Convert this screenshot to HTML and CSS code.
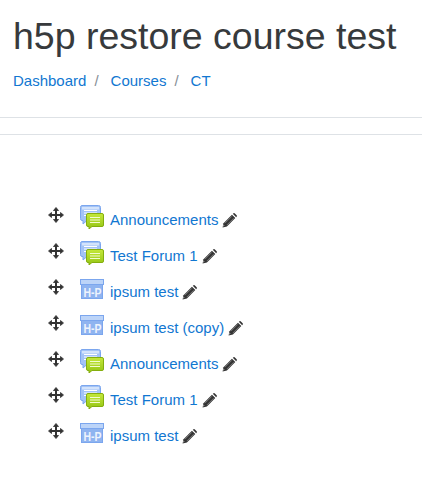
FILE: index.html
```html
<!DOCTYPE html>
<html lang="en">
<head>
<meta charset="utf-8">
<title>h5p restore course test</title>
<link rel="stylesheet" href="styles.css">
</head>
<body>
<svg class="defs" width="0" height="0" aria-hidden="true">
  <defs>
    <linearGradient id="green" x1="0" y1="0" x2="0" y2="1">
      <stop offset="0" stop-color="#c4e83a"/>
      <stop offset="1" stop-color="#93c414"/>
    </linearGradient>
    <symbol id="move" viewBox="0 0 16 16">
      <g fill="#333" stroke="#333" stroke-width=".8" stroke-linejoin="round">
        <path d="M8 .5 10.500 3.500H5.500Z"/>
        <path d="M8 .5 10.500 3.500H5.500Z" transform="rotate(90 8 8)"/>
        <path d="M8 .5 10.500 3.500H5.500Z" transform="rotate(180 8 8)"/>
        <path d="M8 .5 10.500 3.500H5.500Z" transform="rotate(270 8 8)"/>
      </g>
      <path d="M7 3H9V7H13V9H9V13H7V9H3V7H7Z" fill="#333"/>
    </symbol>
    <symbol id="pencil" viewBox="0 0 16 16">
      <path d="M0.6 15.4 1.6 10.8 10.6 1.800 14.200 5.400 5.200 14.400Z" fill="#333"/>
      <path d="M11.500 0.900 12.300 0.300Q13 -0.100 13.700 0.400L15.600 2.300Q16.100 3 15.700 3.700L15.100 4.500Z" fill="#333"/>
      <path d="M3.100 10.900 10.400 3.600M5.100 12.900 12.400 5.600" stroke="#fff" stroke-width=".6" opacity=".6"/>
      <path d="M2.600 13.400 1.400 14.600 1.800 12.600Z" fill="#fff"/>
    </symbol>
    <symbol id="forum" viewBox="0 0 24 24">
      <path d="M2 .5H18.500Q20.500 .5 20.500 2.500V13.500Q20.500 15.500 18.500 15.500H7L3 19V15.500H2Q.5 15.500 .5 13.500V2.500Q.5 .5 2 .5Z" fill="#a3c3f6" stroke="#7ba6ee"/>
      <rect x="2" y="2" width="17" height="2.500" fill="#d3e3fb"/>
      <path d="M4 5.500H17M4 8H17M4 10.500H8" stroke="#fff"/>
      <path d="M8 8.500H22Q23.500 8.500 23.500 10V20Q23.500 21.500 22 21.500H12L9 24V21.500H8Q6.500 21.500 6.500 20V10Q6.500 8.500 8 8.500Z" fill="url(#green)" stroke="#84ae0e"/>
      <path d="M10 12.500H20M10 15H20M10 17.500H20" stroke="#f2fbd0"/>
    </symbol>
    <symbol id="h5p" viewBox="0 0 24 24">
      <rect x=".5" y="2.500" width="23" height="5" fill="#bcd4f8" stroke="#7ba6ee"/>
      <rect x="1.500" y="7.500" width="21" height="14" fill="#8fb4f0" stroke="#7ba6ee"/>
      <text class="h5p-mark" x="3.500" y="19.600" textLength="18" lengthAdjust="spacingAndGlyphs">H-P</text>
    </symbol>
  </defs>
</svg>

<header class="page-header">
  <h1 class="page-title">h5p restore course test</h1>
  <nav class="breadcrumb">
    <a href="#">Dashboard</a><span class="sep">/</span>
    <a href="#">Courses</a><span class="sep">/</span>
    <a href="#">CT</a>
  </nav>
</header>
<div class="rule-band"></div>

<ul class="activities">
  <li class="activity">
    <svg class="move"><use href="#move"/></svg>
    <svg class="mod"><use href="#forum"/></svg>
    <a href="#">Announcements</a>
    <svg class="edit"><use href="#pencil"/></svg>
  </li>
  <li class="activity">
    <svg class="move"><use href="#move"/></svg>
    <svg class="mod"><use href="#forum"/></svg>
    <a href="#">Test Forum 1</a>
    <svg class="edit"><use href="#pencil"/></svg>
  </li>
  <li class="activity">
    <svg class="move"><use href="#move"/></svg>
    <svg class="mod"><use href="#h5p"/></svg>
    <a href="#">ipsum test</a>
    <svg class="edit"><use href="#pencil"/></svg>
  </li>
  <li class="activity">
    <svg class="move"><use href="#move"/></svg>
    <svg class="mod"><use href="#h5p"/></svg>
    <a href="#">ipsum test (copy)</a>
    <svg class="edit"><use href="#pencil"/></svg>
  </li>
  <li class="activity">
    <svg class="move"><use href="#move"/></svg>
    <svg class="mod"><use href="#forum"/></svg>
    <a href="#">Announcements</a>
    <svg class="edit"><use href="#pencil"/></svg>
  </li>
  <li class="activity">
    <svg class="move"><use href="#move"/></svg>
    <svg class="mod"><use href="#forum"/></svg>
    <a href="#">Test Forum 1</a>
    <svg class="edit"><use href="#pencil"/></svg>
  </li>
  <li class="activity">
    <svg class="move"><use href="#move"/></svg>
    <svg class="mod"><use href="#h5p"/></svg>
    <a href="#">ipsum test</a>
    <svg class="edit"><use href="#pencil"/></svg>
  </li>
</ul>
</body>
</html>
```
FILE: styles.css
```css
* { box-sizing: border-box; }
html, body { margin: 0; padding: 0; background: #fff; }
body {
  font-family: "Liberation Sans", Arial, sans-serif;
  font-size: 15px;
  line-height: 22.5px;
  color: #373a3c;
  overflow: hidden;
}
a { color: #1177d1; text-decoration: none; }
.defs { display: block; height: 0; }
.page-header { padding: 14px 13px 0; height: 117px; }
.page-title {
  margin: 0;
  font-size: 37.5px;
  font-weight: 400;
  line-height: 45px;
}
.breadcrumb { margin-top: 11px; display: flex; align-items: center; }
.sep { color: #868e96; margin: 0 12px 0 8px; }
.rule-band {
  height: 18px;
  border-top: 1px solid #dee2e6;
  border-bottom: 1px solid #dee2e6;
}
.activities { list-style: none; margin: 0; padding: 66px 0 0 48px; }
.activity { display: flex; align-items: flex-start; height: 36px; }
.activity a { margin-top: 8px; }
.move { width: 16px; height: 16px; margin-top: 6px; flex: none; }
.mod { width: 24px; height: 24px; margin: 4px 6px 0 16px; flex: none; }
.edit { width: 15px; height: 15px; margin: 12px 0 0 4px; flex: none; }
.h5p-mark { font: 700 12px "Liberation Sans", Arial, sans-serif; fill: #edf3fd; }
```
